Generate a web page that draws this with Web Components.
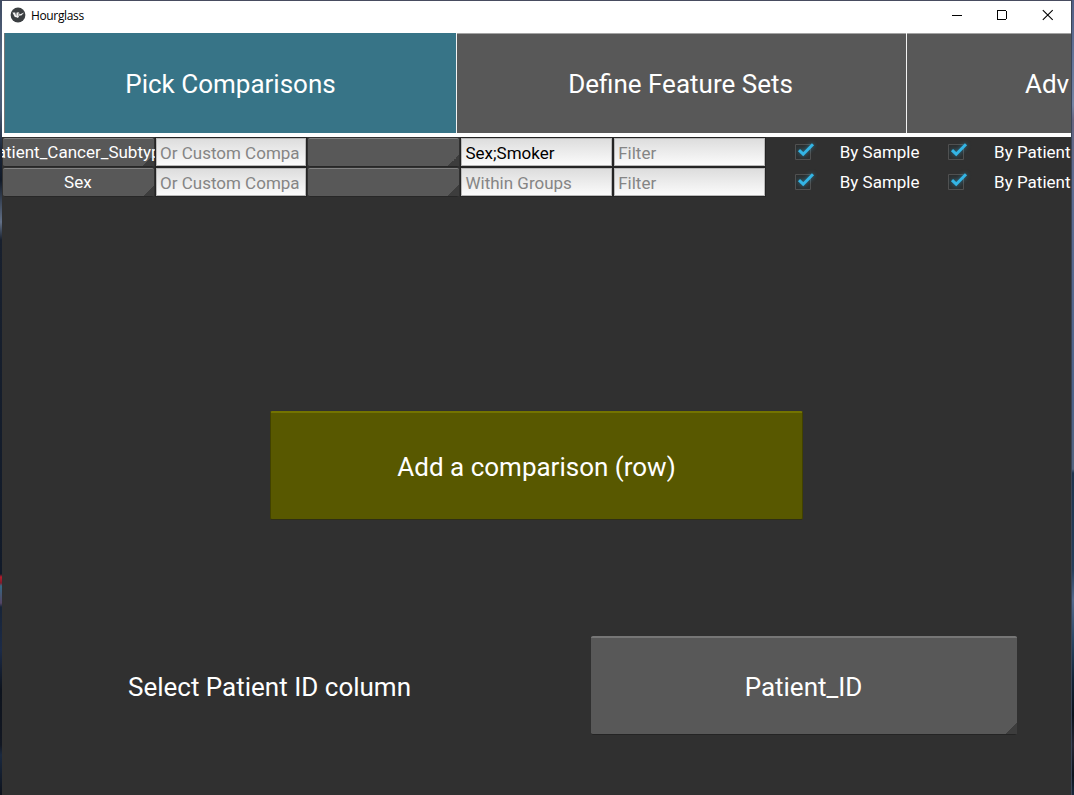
<!DOCTYPE html>
<html lang="en">
<head>
<meta charset="utf-8">
<title>Hourglass</title>
<style>
html,body{margin:0;height:100%;overflow:hidden;background:#141b27}
body{font-family:Roboto,"Liberation Sans",sans-serif}
</style>
</head>
<body>
<hg-window>
  <hg-titlebar slot="bar">Hourglass</hg-titlebar>
  <hg-tabs slot="tabs">
    <hg-tab active>Pick Comparisons</hg-tab>
    <hg-tab>Define Feature Sets</hg-tab>
    <hg-tab cut>Adv</hg-tab>
  </hg-tabs>
  <hg-row>
    <hg-spinner>Patient_Cancer_Subtype</hg-spinner>
    <hg-input hint>Or Custom Compa</hg-input>
    <hg-spinner></hg-spinner>
    <hg-input>Sex;Smoker</hg-input>
    <hg-input hint>Filter</hg-input>
    <hg-check></hg-check><hg-label>By Sample</hg-label>
    <hg-check></hg-check><hg-label>By Patient</hg-label>
  </hg-row>
  <hg-row>
    <hg-spinner>Sex</hg-spinner>
    <hg-input hint>Or Custom Compa</hg-input>
    <hg-spinner></hg-spinner>
    <hg-input hint>Within Groups</hg-input>
    <hg-input hint>Filter</hg-input>
    <hg-check></hg-check><hg-label>By Sample</hg-label>
    <hg-check></hg-check><hg-label>By Patient</hg-label>
  </hg-row>
  <hg-button slot="add">Add a comparison (row)</hg-button>
  <hg-label large slot="footer">Select Patient ID column</hg-label>
  <hg-spinner large slot="footer">Patient_ID</hg-spinner>
</hg-window>
<script>
const define = (name, html) => {
  const t = document.createElement('template');
  t.innerHTML = html;
  customElements.define(name, class extends HTMLElement {
    constructor() {
      super();
      this.attachShadow({mode: 'open'}).append(t.content.cloneNode(true));
    }
  });
};

define('hg-window', `<style>
:host{display:grid;grid-template-columns:2px 1069px 3px;height:795px;overflow:hidden}
.left{background:linear-gradient(#3e4a62 0,#566a84 60px,#4b5b75 110px,#1b2638 150px,#111a28 180px,#627087 222px,#18202e 240px,#111a29 574px,#b51c2b 577px,#7e1c2b 583px,#356782 586px,#534565 603px,#172438 607px,#1c2b48 650px,#0d131d 690px,#121722 745px,#1a2940 755px,#0d121c 795px)}
.right{border-left:1px solid #3c4456;background:linear-gradient(#515f85 0,#66789c 70px,#7484a4 105px,#666581 120px,#5d6c92 180px,#4c6288 400px,#53647f 469px,#1d334d 473px,#263e5b 570px,#53698c 600px,#294664 640px,#122235 680px,#0b111b 715px,#252532 745px,#0d131d 775px,#17283b 795px);box-sizing:border-box}
.window{display:flex;flex-direction:column;box-sizing:border-box;border-top:1px solid #484c60;background:#303030;overflow:hidden;min-width:0}
.rows{height:60px;flex:none}
.add{display:flex;justify-content:center;padding-top:214px;flex:none}
.foot{display:grid;grid-template-columns:534px 426px;column-gap:55px;padding-top:115px;height:99px;flex:none}
</style>
<div class="left"></div>
<div class="window"><slot name="bar"></slot><slot name="tabs"></slot>
<div class="rows"><slot></slot></div>
<div class="add"><slot name="add"></slot></div>
<div class="foot"><slot name="footer"></slot></div></div>
<div class="right"></div>`);

define('hg-titlebar', `<style>
:host{display:flex;align-items:center;height:32px;flex:none;background:#fff;color:#000;font:12px/16px "Open Sans","Noto Sans",sans-serif}
.logo{margin:-4px 5px 0 8px}
.t{flex:1;margin-top:-2px;letter-spacing:-.36px}
.ctl{display:flex;margin-top:-4px;margin-right:1px}
.ctl svg{width:45.5px;height:16px}
</style>
<svg class="logo" width="16" height="16" viewBox="0 0 16 16"><circle cx="8" cy="8" r="7.4" fill="#3b3f42"/><path d="M2.4 5.4L5.2 5.6 6.2 8 6.6 5.4 9 5.3 9.5 7.4 14.2 5.6 11.3 8.6 9.4 8.6 8 11 6.4 10.2 4.8 10z" fill="#f4f4f4"/><path d="M5.3 5.6L6.4 8.6M8.6 5.6L8.4 9" stroke="#666" stroke-width=".6"/></svg>
<span class="t"><slot></slot></span>
<div class="ctl">
<svg viewBox="0 0 46 16" shape-rendering="crispEdges"><path d="M18 8.5h10" stroke="#000"/></svg>
<svg viewBox="0 0 46 16" shape-rendering="crispEdges"><path d="M18.5 3.5h9v9h-9z" fill="none" stroke="#000"/></svg>
<svg viewBox="0 0 46 16"><path d="M18 3l10 10M28 3L18 13" stroke="#000" stroke-width="1.1"/></svg>
</div>`);

define('hg-tabs', `<style>
:host{display:flex;gap:1px;height:100px;flex:none;padding-left:3px;border-left:1px solid #fff;border-bottom:4px solid #fff;background:linear-gradient(90deg,#fff 1px,#777 1px 3px,#f2f2f2 3px);overflow:hidden;box-sizing:content-box}
:host{padding-left:2px}
</style><slot></slot>`);

define('hg-tab', `<style>
:host{display:flex;flex:none;align-items:center;justify-content:center;width:449px;height:100px;box-sizing:border-box;border-top:1px solid #a3a3a3;background:#585858;color:#fff;font-size:26px;white-space:nowrap;padding-top:1px;padding-right:2px}
:host([active]){width:451px;background:#377487;border-top-color:#377487;padding-right:0}
:host([cut]){width:164px;justify-content:flex-start;padding-left:118px}
</style><span><slot></slot></span>`);

define('hg-row', `<style>
:host{display:grid;grid-template-columns:repeat(5,152.72px) repeat(4,76.35px);height:30px}
</style><slot></slot>`);

define('hg-spinner', `<style>
:host{display:flex;position:relative;align-items:center;justify-content:center;min-width:0;box-sizing:border-box;height:29px;margin:1px 1px 0 1px;border-top:1px solid #828282;border-bottom:1px solid #272727;border-radius:2px;background:#585858;color:#fff;font-size:17px;white-space:nowrap}
:host::after{content:"";position:absolute;right:0;bottom:0;width:11px;height:11px;background:linear-gradient(135deg,transparent 50%,#3d3d3d 50%)}
span{position:relative;z-index:1;margin:-2px 1px 0 0}
:host([large]){height:99px;font-size:26px;margin:1px 0 0;border-top:2px solid #767676;border-bottom:1px solid #242424}
:host([large]) span{margin:2px 1px 0 0}
</style><span><slot></slot></span>`);

define('hg-input', `<style>
:host{display:flex;position:relative;z-index:2;align-items:center;min-width:0;box-sizing:border-box;height:30px;margin:0 0 0 .3px;border:1px solid #242424;padding:2px 0 0 4px;background:linear-gradient(#dcdcdc,#fcfcfc);box-shadow:inset 0 0 0 1px #b9b9b9;color:#000;font-size:17px;white-space:nowrap;overflow:hidden}
:host([hint]){color:#858585}
</style><span><slot></slot></span>`);

define('hg-check', `<style>
:host{display:flex;align-items:center;justify-content:center;padding-left:1px}
svg{overflow:visible}
.tick{filter:drop-shadow(0 0 2px rgba(51,181,229,.55))}
</style><svg width="20" height="20" viewBox="0 0 20 20"><path d="M1.5 2.5h15v15h-15z" fill="#2c2f30" stroke="#505050"/><path class="tick" d="M5 8.2L9.2 12.2 19 2.3" fill="none" stroke="#33b5e5" stroke-width="3"/></svg>`);

define('hg-label', `<style>
:host{display:flex;align-items:center;justify-content:center;min-width:0;color:#fff;font-size:17px;white-space:nowrap}
:host(:not([large])) span{margin-right:1px}
:host([large]){font-size:26px;padding:4px 0 0 1px}
</style><span><slot></slot></span>`);

define('hg-button', `<style>
:host{display:flex;align-items:center;justify-content:center;width:533px;height:109px;box-sizing:border-box;border:1px solid #414100;border-top:2px solid #737300;border-bottom-color:#2e2e15;border-radius:2px;background:#585800;color:#fff;font-size:26px;padding-top:1px;margin-bottom:0}
</style><span><slot></slot></span>`);
</script>
</body>
</html>
